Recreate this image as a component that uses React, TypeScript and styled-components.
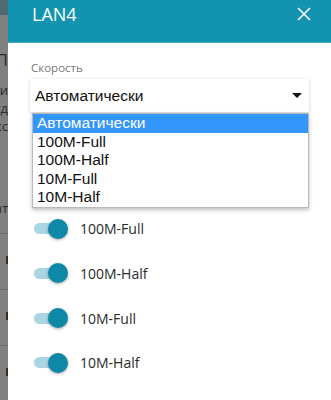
import React, { FC } from 'react';
import styled, { createGlobalStyle } from 'styled-components';

const GlobalStyle = createGlobalStyle`
  html, body {
    margin: 0;
    padding: 0;
    background: #ffffff;
  }
  body {
    font-family: 'Open Sans', 'Liberation Sans', sans-serif;
  }
`;

const Screen = styled.div`
  display: flex;
  width: 331px;
  height: 400px;
  overflow: hidden;
`;

// dimmed page behind the side panel
const Backdrop = styled.div`
  width: 8px;
  flex: none;
  background: #808080;
  overflow: hidden;
  display: flex;
  flex-direction: column;
`;

const BackdropHead = styled.div`
  height: 15px;
  background: #4f6a72;
  flex: none;
`;

const BackdropText = styled.div<{ $top: number; $size?: number }>`
  margin-top: ${(p) => p.$top}px;
  display: flex;
  justify-content: flex-end;
  white-space: nowrap;
  font-size: ${(p) => p.$size || 13}px;
  line-height: 16px;
  color: #2b2b2b;
`;

const BackdropRule = styled.div<{ $top: number }>`
  margin-top: ${(p) => p.$top}px;
  height: 1px;
  background: #6c6c6c;
`;

const BackdropMark = styled.div<{ $top: number }>`
  margin-top: ${(p) => p.$top}px;
  margin-left: 6px;
  width: 2px;
  height: 8px;
  background: #3b2c22;
`;

const Panel = styled.div`
  flex: 1;
  display: flex;
  flex-direction: column;
  background: #ffffff;
`;

const Header = styled.div`
  height: 43px;
  flex: none;
  background: #1294b0;
  border-bottom: 1px solid #3da8c0;
  box-sizing: border-box;
  display: flex;
  align-items: flex-start;
  justify-content: space-between;
  padding: 2px 20px 0 24px;
`;

const Title = styled.div`
  color: #ffffff;
  font-size: 18px;
  line-height: 24px;
`;

const CloseButton = styled.div`
  width: 14px;
  height: 14px;
  margin-top: 5px;
  display: flex;
`;

const Body = styled.div`
  padding: 17px 22px 0 22px;
  display: flex;
  flex-direction: column;
`;

const Label = styled.div`
  font-size: 11.5px;
  line-height: 16px;
  color: #777777;
  padding-left: 1px;
`;

const Field = styled.div`
  position: relative;
  margin-top: 3px;
`;

const Select = styled.div`
  height: 33px;
  background: #ffffff;
  box-shadow: 0 1px 3px rgba(0, 0, 0, 0.22);
  display: flex;
  align-items: center;
  justify-content: space-between;
  padding: 0 7px 0 5px;
  font-family: 'Liberation Sans', Arial, sans-serif;
  font-size: 15.5px;
  color: #111111;
`;

const Caret = styled.div`
  width: 0;
  height: 0;
  border-left: 5px solid transparent;
  border-right: 5px solid transparent;
  border-top: 5px solid #111111;
`;

const Menu = styled.div`
  position: absolute;
  left: 2px;
  right: 0;
  top: 34px;
  background: #ffffff;
  border: 1px solid #b9b9b9;
  box-shadow: 0 2px 4px rgba(0, 0, 0, 0.25);
  z-index: 2;
  font-family: 'Liberation Sans', Arial, sans-serif;
  font-size: 15.5px;
`;

const Option = styled.div<{ $active?: boolean }>`
  height: 18.6px;
  line-height: 18.6px;
  padding: 0 4px;
  background: ${(p) => (p.$active ? '#3296fa' : 'transparent')};
  color: ${(p) => (p.$active ? '#ffffff' : '#111111')};
`;

const Toggles = styled.div`
  display: flex;
  flex-direction: column;
  margin-top: 62px;
  gap: 24.7px;
`;

const ToggleRow = styled.div`
  display: flex;
  align-items: center;
  height: 20px;
`;

const Switch = styled.div`
  position: relative;
  width: 38px;
  height: 20px;
  margin-left: 4px;
  flex: none;
`;

const Track = styled.div`
  position: absolute;
  left: 0;
  top: 4.5px;
  width: 32px;
  height: 11px;
  border-radius: 6px;
  background: #a9d6e2;
`;

const Knob = styled.div`
  position: absolute;
  left: 14px;
  top: 0;
  width: 20px;
  height: 20px;
  border-radius: 50%;
  background: #0e88a7;
  box-shadow: 0 1px 3px rgba(0, 0, 0, 0.35);
`;

const ToggleText = styled.div`
  margin-left: 8px;
  font-size: 14px;
  color: #2a2a2a;
`;

const options = ['Автоматически', '100M-Full', '100M-Half', '10M-Full', '10M-Half'];

const App: FC = () => {
  return (
    <>
      <GlobalStyle />
      <Screen>
        <Backdrop>
          <BackdropHead />
          <BackdropText $top={37} $size={17}>
            П
          </BackdropText>
          <BackdropText $top={14}>ои</BackdropText>
          <BackdropText $top={2}>гд</BackdropText>
          <BackdropText $top={2}>кс</BackdropText>
          <BackdropText $top={66}>ат</BackdropText>
          <BackdropRule $top={17} />
          <BackdropMark $top={22} />
          <BackdropRule $top={25} />
          <BackdropMark $top={22} />
          <BackdropRule $top={25} />
          <BackdropMark $top={22} />
        </Backdrop>

        <Panel>
          <Header>
            <Title>LAN4</Title>
            <CloseButton>
              <svg width="14" height="14" viewBox="0 0 14 14">
                <path d="M1 1L13 13M13 1L1 13" stroke="#ffffff" strokeWidth="1.6" fill="none" />
              </svg>
            </CloseButton>
          </Header>

          <Body>
            <Label>Скорость</Label>
            <Field>
              <Select>
                <span>Автоматически</span>
                <Caret />
              </Select>
              <Menu>
                {options.map((o, i) => (
                  <Option key={o} $active={i === 0}>
                    {o}
                  </Option>
                ))}
              </Menu>
            </Field>

            <Toggles>
              {options.map((o) => (
                <ToggleRow key={o}>
                  <Switch>
                    <Track />
                    <Knob />
                  </Switch>
                  <ToggleText>{o}</ToggleText>
                </ToggleRow>
              ))}
            </Toggles>
          </Body>
        </Panel>
      </Screen>
    </>
  );
};

export default App;
